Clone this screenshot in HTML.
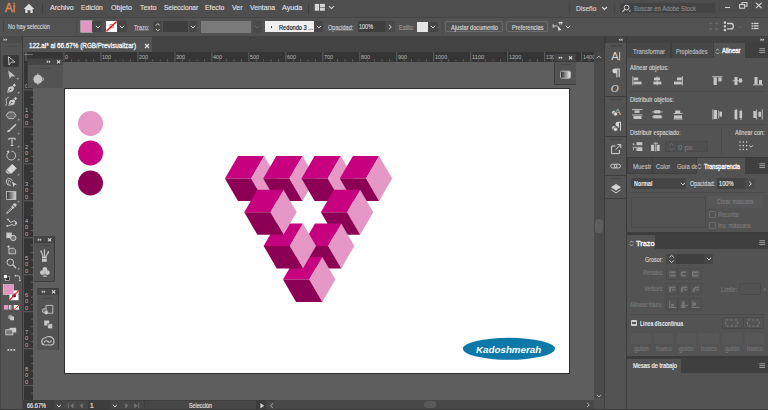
<!DOCTYPE html>
<html><head><meta charset="utf-8"><style>
html,body{margin:0;padding:0;width:768px;height:410px;overflow:hidden;background:#535353}
body>div,body>svg{position:absolute}
</style></head><body>
<div style="left:0px;top:0px;width:768px;height:17px;background:#4e4e4e;"></div>
<div style="left:0px;top:16.5px;width:768px;height:1px;background:#454545;"></div>
<div style="left:0px;top:17.5px;width:768px;height:18px;background:#525252;"></div>
<div style="left:0px;top:35.5px;width:768px;height:1px;background:#3e3e3e;"></div>
<div style="left:0px;top:36px;width:768px;height:7px;background:#424242;"></div>
<div style="left:0px;top:36px;width:23px;height:374px;background:#4a4a4a;"></div>
<div style="left:1px;top:43px;width:21px;height:367px;background:#535353;"></div>
<div style="left:23px;top:36px;width:581px;height:16px;background:#434343;"></div>
<div style="left:22px;top:37px;width:130px;height:15px;background:#535353;"></div>
<div style="left:24px;top:52px;width:570px;height:9.5px;background:#353535;"></div>
<div style="left:24px;top:61.5px;width:9px;height:338px;background:#353535;"></div>
<div style="left:33px;top:61.5px;width:561px;height:338px;background:#5e5e5e;"></div>
<div style="left:64px;top:88px;width:506px;height:285.5px;background:#2e2e2e;"></div>
<div style="left:65px;top:89px;width:504px;height:283.5px;background:#ffffff;"></div>
<div style="left:594px;top:52px;width:10px;height:347px;background:#4b4b4b;"></div>
<div style="left:22px;top:399.5px;width:582px;height:10.5px;background:#484848;"></div>
<div style="left:604px;top:36px;width:1.5px;height:374px;background:#3a3a3a;"></div>
<div style="left:605px;top:43px;width:21px;height:367px;background:#535353;"></div>
<div style="left:626px;top:36px;width:1px;height:374px;background:#3a3a3a;"></div>
<div style="left:627px;top:43px;width:141px;height:367px;background:#535353;"></div>
<svg style="left:0;top:0" width="768" height="410"><circle cx="90.5" cy="123.5" r="12.5" fill="#e597c5"/><circle cx="90.5" cy="153" r="12.5" fill="#c6007e"/><circle cx="90.5" cy="183" r="12.5" fill="#8b0055"/></svg>
<svg style="left:0;top:0" width="768" height="410"><polygon points="224.90,178.60 238.00,156.10 264.20,156.10 251.10,178.60" fill="#c6007e"/><polygon points="251.10,178.60 264.20,156.10 277.30,178.60 264.20,201.10" fill="#e597c5"/><polygon points="224.90,178.60 251.10,178.60 264.20,201.10 238.00,201.10" fill="#8b0055"/><polygon points="263.20,178.60 276.30,156.10 302.50,156.10 289.40,178.60" fill="#c6007e"/><polygon points="289.40,178.60 302.50,156.10 315.60,178.60 302.50,201.10" fill="#e597c5"/><polygon points="263.20,178.60 289.40,178.60 302.50,201.10 276.30,201.10" fill="#8b0055"/><polygon points="301.50,178.60 314.60,156.10 340.80,156.10 327.70,178.60" fill="#c6007e"/><polygon points="327.70,178.60 340.80,156.10 353.90,178.60 340.80,201.10" fill="#e597c5"/><polygon points="301.50,178.60 327.70,178.60 340.80,201.10 314.60,201.10" fill="#8b0055"/><polygon points="339.80,178.60 352.90,156.10 379.10,156.10 366.00,178.60" fill="#c6007e"/><polygon points="366.00,178.60 379.10,156.10 392.20,178.60 379.10,201.10" fill="#e597c5"/><polygon points="339.80,178.60 366.00,178.60 379.10,201.10 352.90,201.10" fill="#8b0055"/><polygon points="320.87,212.25 333.97,189.75 360.17,189.75 347.07,212.25" fill="#c6007e"/><polygon points="347.07,212.25 360.17,189.75 373.27,212.25 360.17,234.75" fill="#e597c5"/><polygon points="320.87,212.25 347.07,212.25 360.17,234.75 333.97,234.75" fill="#8b0055"/><polygon points="301.94,245.90 315.04,223.40 341.24,223.40 328.14,245.90" fill="#c6007e"/><polygon points="328.14,245.90 341.24,223.40 354.34,245.90 341.24,268.40" fill="#e597c5"/><polygon points="301.94,245.90 328.14,245.90 341.24,268.40 315.04,268.40" fill="#8b0055"/><polygon points="283.01,279.55 296.11,257.05 322.31,257.05 309.21,279.55" fill="#c6007e"/><polygon points="309.21,279.55 322.31,257.05 335.41,279.55 322.31,302.05" fill="#e597c5"/><polygon points="283.01,279.55 309.21,279.55 322.31,302.05 296.11,302.05" fill="#8b0055"/><polygon points="263.64,245.90 276.74,223.40 302.94,223.40 289.84,245.90" fill="#c6007e"/><polygon points="289.84,245.90 302.94,223.40 316.04,245.90 302.94,268.40" fill="#e597c5"/><polygon points="263.64,245.90 289.84,245.90 302.94,268.40 276.74,268.40" fill="#8b0055"/><polygon points="244.27,212.25 257.37,189.75 283.57,189.75 270.47,212.25" fill="#c6007e"/><polygon points="270.47,212.25 283.57,189.75 296.67,212.25 283.57,234.75" fill="#e597c5"/><polygon points="244.27,212.25 270.47,212.25 283.57,234.75 257.37,234.75" fill="#8b0055"/></svg>
<svg style="left:0;top:0" width="768" height="410"><ellipse cx="508.9" cy="348.8" rx="46.1" ry="11" fill="#0d79a8"/></svg>
<div style="left:476.20px;top:344.89px;font:italic bold 9.6px/1 'Liberation Sans', sans-serif;color:#ffffff;white-space:pre;transform:scaleX(1.019);transform-origin:0 0;">Kadoshmerah</div>
<div style="left:4.80px;top:2.07px;font:normal normal 12.8px/1 'Liberation Sans', sans-serif;color:#d68c55;white-space:pre;transform:scaleX(0.896);transform-origin:0 0;-webkit-text-stroke:0.45px #d68c55">Ai</div>
<svg style="left:23px;top:3px;" width="12" height="11" viewBox="0 0 12 11"><path d="M6 0.8 L11.3 6.1 L9.7 6.1 L9.7 10 L7.4 10 L7.4 7.2 L4.6 7.2 L4.6 10 L2.3 10 L2.3 6.1 L0.7 6.1 Z" fill="#dcdcdc"/></svg>
<div style="left:41.5px;top:3px;width:1px;height:11px;background:#3f3f3f;"></div>
<div style="left:50.00px;top:4.25px;font:normal normal 8px/1 'Liberation Sans', sans-serif;color:#e2e2e2;white-space:pre;transform:scaleX(0.888);transform-origin:0 0;-webkit-text-stroke:0.12px #e2e2e2">Archivo</div>
<div style="left:81.40px;top:4.25px;font:normal normal 8px/1 'Liberation Sans', sans-serif;color:#e2e2e2;white-space:pre;transform:scaleX(0.831);transform-origin:0 0;-webkit-text-stroke:0.12px #e2e2e2">Edición</div>
<div style="left:111.00px;top:4.25px;font:normal normal 8px/1 'Liberation Sans', sans-serif;color:#e2e2e2;white-space:pre;transform:scaleX(0.891);transform-origin:0 0;-webkit-text-stroke:0.12px #e2e2e2">Objeto</div>
<div style="left:139.50px;top:4.25px;font:normal normal 8px/1 'Liberation Sans', sans-serif;color:#e2e2e2;white-space:pre;transform:scaleX(0.863);transform-origin:0 0;-webkit-text-stroke:0.12px #e2e2e2">Texto</div>
<div style="left:163.50px;top:4.25px;font:normal normal 8px/1 'Liberation Sans', sans-serif;color:#e2e2e2;white-space:pre;transform:scaleX(0.816);transform-origin:0 0;-webkit-text-stroke:0.12px #e2e2e2">Seleccionar</div>
<div style="left:205.25px;top:4.25px;font:normal normal 8px/1 'Liberation Sans', sans-serif;color:#e2e2e2;white-space:pre;transform:scaleX(0.853);transform-origin:0 0;-webkit-text-stroke:0.12px #e2e2e2">Efecto</div>
<div style="left:231.50px;top:4.25px;font:normal normal 8px/1 'Liberation Sans', sans-serif;color:#e2e2e2;white-space:pre;transform:scaleX(0.883);transform-origin:0 0;-webkit-text-stroke:0.12px #e2e2e2">Ver</div>
<div style="left:249.50px;top:4.25px;font:normal normal 8px/1 'Liberation Sans', sans-serif;color:#e2e2e2;white-space:pre;transform:scaleX(0.855);transform-origin:0 0;-webkit-text-stroke:0.12px #e2e2e2">Ventana</div>
<div style="left:281.50px;top:4.25px;font:normal normal 8px/1 'Liberation Sans', sans-serif;color:#e2e2e2;white-space:pre;transform:scaleX(0.892);transform-origin:0 0;-webkit-text-stroke:0.12px #e2e2e2">Ayuda</div>
<div style="left:308px;top:3px;width:1px;height:11px;background:#3f3f3f;"></div>
<svg style="left:314px;top:3px;" width="12" height="8" viewBox="0 0 12 8"><rect x="0.8" y="0.9" width="4.2" height="6.8" fill="#d6d6d6"/><rect x="5.9" y="0.9" width="5" height="3.1" fill="#d6d6d6"/><rect x="5.9" y="4.6" width="5" height="3.1" fill="#d6d6d6"/></svg>
<svg style="left:328px;top:5px;" width="7" height="5" viewBox="0 0 7 5"><path d="M1 1.2 L3.5 3.6 L6 1.2" stroke="#d6d6d6" stroke-width="1.1" fill="none"/></svg>
<div style="left:569.3px;top:3px;width:1px;height:11px;background:#444444;"></div>
<div style="left:576.00px;top:4.55px;font:normal normal 8px/1 'Liberation Sans', sans-serif;color:#d6d6d6;white-space:pre;transform:scaleX(0.819);transform-origin:0 0;-webkit-text-stroke:0.15px #d6d6d6;">Diseño</div>
<svg style="left:601px;top:6px;" width="7" height="5" viewBox="0 0 7 5"><path d="M1 1 L3.5 3.5 L6 1" stroke="#d6d6d6" stroke-width="1.1" fill="none"/></svg>
<div style="left:614.2px;top:3px;width:1px;height:11px;background:#444444;"></div>
<div style="left:620px;top:3px;width:94.5px;height:10.3px;background:#434343;border-radius:1.5px"></div>
<svg style="left:621px;top:3.5px;" width="12" height="9" viewBox="0 0 12 9"><circle cx="5.6" cy="3.6" r="2.4" stroke="#cfcfcf" stroke-width="1" fill="none"/><path d="M3.9 5.3 L1.3 7.9" stroke="#cfcfcf" stroke-width="1.2"/><path d="M7.6 6.6 L10 6.6 L8.8 7.9 Z" fill="#cfcfcf"/></svg>
<div style="left:633.70px;top:5.23px;font:normal normal 7.2px/1 'Liberation Sans', sans-serif;color:#8a8a8a;white-space:pre;transform:scaleX(0.829);transform-origin:0 0;-webkit-text-stroke:0.15px #8a8a8a;">Buscar en Adobe Stock</div>
<div style="left:719px;top:-1px;width:47.5px;height:11.5px;background:transparent;box-sizing:border-box;border:1px solid #484848;border-radius:2px"></div>
<div style="left:735.5px;top:0px;width:1px;height:10.5px;background:#484848;"></div>
<div style="left:751.5px;top:0px;width:1px;height:10.5px;background:#484848;"></div>
<div style="left:724.5px;top:6.5px;width:5.5px;height:1.3px;background:#d6d6d6;"></div>
<svg style="left:739px;top:2px;" width="9" height="7" viewBox="0 0 9 7"><rect x="3" y="0.6" width="5" height="3.6" stroke="#d6d6d6" stroke-width="1" fill="none"/><rect x="0.6" y="2.6" width="5" height="3.6" stroke="#d6d6d6" stroke-width="1" fill="#4e4e4e"/></svg>
<svg style="left:755px;top:2px;" width="8" height="7" viewBox="0 0 8 7"><path d="M1 0.8 L6.6 6.2 M6.6 0.8 L1 6.2" stroke="#d6d6d6" stroke-width="1.1"/></svg>
<div style="left:2.7px;top:21px;width:1.6px;height:10.6px;background:#434343;"></div>
<div style="left:8.20px;top:24.25px;font:normal normal 6.7px/1 'Liberation Sans', sans-serif;color:#d6d6d6;white-space:pre;transform:scaleX(0.821);transform-origin:0 0;-webkit-text-stroke:0.15px #d6d6d6;">No hay selección</div>
<div style="left:76.4px;top:19px;width:1px;height:15px;background:#4a4a4a;"></div>
<div style="left:80.9px;top:21.3px;width:11px;height:10.7px;background:#e396c4;box-shadow:0 0 0 0.6px #cfcfcf"></div>
<div style="left:92px;top:21.3px;width:10.4px;height:10.7px;background:#464646;border-radius:0 2px 2px 0"></div>
<svg style="left:94.5px;top:25px;" width="6" height="4" viewBox="0 0 6 4"><path d="M0.8 0.8 L3 2.9 L5.2 0.8" stroke="#d8d8d8" stroke-width="1" fill="none"/></svg>
<div style="left:105.5px;top:21.3px;width:11px;height:10.7px;background:#ffffff;"></div>
<svg style="left:105.5px;top:21.3px;" width="11" height="10.7" viewBox="0 0 11 10.7"><rect x="4" y="3.5" width="3.3" height="3.3" stroke="#777" stroke-width="0.7" fill="none"/><path d="M0.5 10.2 L10.5 0.5" stroke="#ff0000" stroke-width="1.3"/></svg>
<div style="left:116.5px;top:21.3px;width:10.4px;height:10.7px;background:#464646;border-radius:0 2px 2px 0"></div>
<svg style="left:119px;top:25px;" width="6" height="4" viewBox="0 0 6 4"><path d="M0.8 0.8 L3 2.9 L5.2 0.8" stroke="#d8d8d8" stroke-width="1" fill="none"/></svg>
<div style="left:133.80px;top:24.59px;font:normal normal 6.3px/1 'Liberation Sans', sans-serif;color:#d0d0d0;white-space:pre;transform:scaleX(0.863);transform-origin:0 0;-webkit-text-stroke:0.15px #d0d0d0;">Trazo:</div>
<div style="left:133.8px;top:30.4px;width:15.2px;height:0.5px;background:#6e6e6e;"></div>
<div style="left:153.2px;top:21.4px;width:9px;height:10.6px;background:#464646;"></div>
<svg style="left:154px;top:21.5px;" width="8" height="10.5" viewBox="0 0 8 10.5"><path d="M1.8 3.6 L3.8 1.6 L5.8 3.6 M1.8 6.9 L3.8 8.9 L5.8 6.9" stroke="#d8d8d8" stroke-width="0.9" fill="none"/></svg>
<div style="left:163px;top:21.4px;width:24.5px;height:10.6px;background:#3e3e3e;"></div>
<div style="left:188.5px;top:21.4px;width:8px;height:10.6px;background:#464646;"></div>
<svg style="left:189.5px;top:25px;" width="6" height="4" viewBox="0 0 6 4"><path d="M0.8 0.8 L3 2.9 L5.2 0.8" stroke="#d8d8d8" stroke-width="1" fill="none"/></svg>
<div style="left:200.8px;top:21px;width:50.7px;height:12px;background:#7a7a7a;"></div>
<div style="left:252.5px;top:21px;width:9.3px;height:12px;background:#4a4a4a;"></div>
<svg style="left:254px;top:25px;" width="6" height="4" viewBox="0 0 6 4"><path d="M0.8 0.8 L3 2.9 L5.2 0.8" stroke="#6a6a6a" stroke-width="1" fill="none"/></svg>
<div style="left:265.2px;top:21px;width:48.8px;height:11px;background:#efefef;"></div>
<div style="left:270.5px;top:26.2px;width:1.4px;height:1.4px;background:#222;border-radius:1px"></div>
<div style="left:279.00px;top:24.53px;font:normal normal 6.5px/1 'Liberation Sans', sans-serif;color:#111111;white-space:pre;transform:scaleX(0.871);transform-origin:0 0;-webkit-text-stroke:0.15px #111111;">Redondo 3 ...</div>
<div style="left:314px;top:21px;width:9.3px;height:11px;background:#464646;"></div>
<svg style="left:315.7px;top:25px;" width="6" height="4" viewBox="0 0 6 4"><path d="M0.8 0.8 L3 2.9 L5.2 0.8" stroke="#d8d8d8" stroke-width="1" fill="none"/></svg>
<div style="left:327.90px;top:24.59px;font:normal normal 6.3px/1 'Liberation Sans', sans-serif;color:#d0d0d0;white-space:pre;transform:scaleX(0.881);transform-origin:0 0;-webkit-text-stroke:0.15px #d0d0d0;">Opacidad:</div>
<div style="left:327.9px;top:30.4px;width:25.3px;height:0.5px;background:#6e6e6e;"></div>
<div style="left:357.6px;top:21px;width:27.1px;height:11px;background:#3e3e3e;"></div>
<div style="left:359.20px;top:24.43px;font:normal normal 6.5px/1 'Liberation Sans', sans-serif;color:#d6d6d6;white-space:pre;transform:scaleX(0.842);transform-origin:0 0;-webkit-text-stroke:0.15px #d6d6d6;">100%</div>
<div style="left:385px;top:21px;width:10px;height:11px;background:#4a4a4a;box-sizing:border-box;border:0.6px solid #474747"></div>
<svg style="left:388px;top:24px;" width="5" height="6" viewBox="0 0 5 6"><path d="M1 0.8 L3.3 3 L1 5.2" stroke="#d8d8d8" stroke-width="1" fill="none"/></svg>
<div style="left:399.00px;top:24.59px;font:normal normal 6.3px/1 'Liberation Sans', sans-serif;color:#9a9a9a;white-space:pre;transform:scaleX(0.875);transform-origin:0 0;-webkit-text-stroke:0.15px #9a9a9a;">Estilo:</div>
<div style="left:417.4px;top:21.5px;width:10.8px;height:10.5px;background:#e6e6e6;"></div>
<div style="left:428.2px;top:21.5px;width:9.8px;height:10.5px;background:#464646;"></div>
<svg style="left:430.3px;top:25px;" width="6" height="4" viewBox="0 0 6 4"><path d="M0.8 0.8 L3 2.9 L5.2 0.8" stroke="#d8d8d8" stroke-width="1" fill="none"/></svg>
<div style="left:441.5px;top:19px;width:1px;height:15px;background:#484848;"></div>
<div style="left:445.4px;top:21px;width:58.1px;height:11px;background:transparent;box-sizing:border-box;border:1px solid #6a6a6a;border-radius:2px"></div>
<div style="left:451.00px;top:24.59px;font:normal normal 6.3px/1 'Liberation Sans', sans-serif;color:#d8d8d8;white-space:pre;transform:scaleX(0.895);transform-origin:0 0;-webkit-text-stroke:0.15px #d8d8d8;">Ajustar documento</div>
<div style="left:506px;top:21px;width:42px;height:11px;background:transparent;box-sizing:border-box;border:1px solid #6a6a6a;border-radius:2px"></div>
<div style="left:512.00px;top:24.59px;font:normal normal 6.3px/1 'Liberation Sans', sans-serif;color:#d8d8d8;white-space:pre;transform:scaleX(0.891);transform-origin:0 0;-webkit-text-stroke:0.15px #d8d8d8;">Preferencias</div>
<svg style="left:552px;top:21px;" width="12" height="12" viewBox="0 0 12 12"><path d="M1.2 5 L5 5 M1.2 3.3 L1.2 6.8 M7.8 0.8 L7.8 3.6 M9.3 0.8 L9.3 3.6 M6.5 1.6 L10.8 1.6" stroke="#d4d4d4" stroke-width="1" fill="none"/><path d="M5.3 4.2 L9.6 9.2 L7.4 9.1 L6.9 10.9 Z" fill="#e0e0e0"/></svg>
<svg style="left:565px;top:25px;" width="6" height="4" viewBox="0 0 6 4"><path d="M0.8 0.8 L3 2.9 L5.2 0.8" stroke="#d8d8d8" stroke-width="1" fill="none"/></svg>
<svg style="left:709px;top:22px;" width="10" height="9" viewBox="0 0 10 9"><g fill="#6e6e6e"><rect x="0.5" y="0.5" width="2" height="2"/><rect x="6.5" y="0.5" width="2" height="2"/><rect x="0.5" y="6" width="2" height="2"/><rect x="6.5" y="6" width="2" height="2"/></g></svg>
<svg style="left:723px;top:21px;" width="12" height="11" viewBox="0 0 12 11"><g fill="#d0d0d0"><rect x="0.8" y="0.5" width="2.2" height="2.2"/><rect x="0.8" y="4.2" width="2.2" height="2.2"/><rect x="0.8" y="7.9" width="2.2" height="2.2"/></g><path d="M4 2.5 L8.2 2.5 Q10.3 2.5 10.3 5.2 Q10.3 7.9 8.2 7.9 L4 7.9" stroke="#d0d0d0" stroke-width="1.3" fill="none"/></svg>
<svg style="left:737px;top:25px;" width="6" height="4" viewBox="0 0 6 4"><path d="M0.8 0.8 L3 2.9 L5.2 0.8" stroke="#6e6e6e" stroke-width="1" fill="none"/></svg>
<svg style="left:751px;top:22px;" width="8" height="9" viewBox="0 0 8 9"><g fill="#d0d0d0"><rect x="0.5" y="0.8" width="1.5" height="1.3"/><rect x="2.5" y="0.8" width="5" height="1.3"/><rect x="0.5" y="3.3" width="1.5" height="1.3"/><rect x="2.5" y="3.3" width="5" height="1.3"/><rect x="0.5" y="5.8" width="1.5" height="1.3"/><rect x="2.5" y="5.8" width="5" height="1.3"/></g></svg>
<div style="left:28.70px;top:42.13px;font:normal normal 7.2px/1 'Liberation Sans', sans-serif;color:#f4f4f4;white-space:pre;transform:scaleX(0.878);transform-origin:0 0;-webkit-text-stroke:0.3px #f4f4f4">122.ai* al 66.67% (RGB/Previsualizar)</div>
<svg style="left:144px;top:42.5px;" width="6" height="6" viewBox="0 0 6 6"><path d="M1 1 L5 5 M5 1 L1 5" stroke="#e0e0e0" stroke-width="1.2"/></svg>
<svg style="left:0px;top:0px;" width="768" height="410" viewBox="0 0 768 410"><rect x="63.60" y="52" width="0.8" height="9.5" fill="#6a6a6a"/><rect x="71.00" y="59.3" width="0.8" height="2.2" fill="#6a6a6a"/><rect x="78.39" y="59.3" width="0.8" height="2.2" fill="#6a6a6a"/><rect x="85.79" y="59.3" width="0.8" height="2.2" fill="#6a6a6a"/><rect x="93.18" y="59.3" width="0.8" height="2.2" fill="#6a6a6a"/><rect x="100.58" y="52" width="0.8" height="9.5" fill="#6a6a6a"/><rect x="107.98" y="59.3" width="0.8" height="2.2" fill="#6a6a6a"/><rect x="115.37" y="59.3" width="0.8" height="2.2" fill="#6a6a6a"/><rect x="122.77" y="59.3" width="0.8" height="2.2" fill="#6a6a6a"/><rect x="130.16" y="59.3" width="0.8" height="2.2" fill="#6a6a6a"/><rect x="137.56" y="52" width="0.8" height="9.5" fill="#6a6a6a"/><rect x="144.96" y="59.3" width="0.8" height="2.2" fill="#6a6a6a"/><rect x="152.35" y="59.3" width="0.8" height="2.2" fill="#6a6a6a"/><rect x="159.75" y="59.3" width="0.8" height="2.2" fill="#6a6a6a"/><rect x="167.14" y="59.3" width="0.8" height="2.2" fill="#6a6a6a"/><rect x="174.54" y="52" width="0.8" height="9.5" fill="#6a6a6a"/><rect x="181.94" y="59.3" width="0.8" height="2.2" fill="#6a6a6a"/><rect x="189.33" y="59.3" width="0.8" height="2.2" fill="#6a6a6a"/><rect x="196.73" y="59.3" width="0.8" height="2.2" fill="#6a6a6a"/><rect x="204.12" y="59.3" width="0.8" height="2.2" fill="#6a6a6a"/><rect x="211.52" y="52" width="0.8" height="9.5" fill="#6a6a6a"/><rect x="218.92" y="59.3" width="0.8" height="2.2" fill="#6a6a6a"/><rect x="226.31" y="59.3" width="0.8" height="2.2" fill="#6a6a6a"/><rect x="233.71" y="59.3" width="0.8" height="2.2" fill="#6a6a6a"/><rect x="241.10" y="59.3" width="0.8" height="2.2" fill="#6a6a6a"/><rect x="248.50" y="52" width="0.8" height="9.5" fill="#6a6a6a"/><rect x="255.90" y="59.3" width="0.8" height="2.2" fill="#6a6a6a"/><rect x="263.29" y="59.3" width="0.8" height="2.2" fill="#6a6a6a"/><rect x="270.69" y="59.3" width="0.8" height="2.2" fill="#6a6a6a"/><rect x="278.08" y="59.3" width="0.8" height="2.2" fill="#6a6a6a"/><rect x="285.48" y="52" width="0.8" height="9.5" fill="#6a6a6a"/><rect x="292.88" y="59.3" width="0.8" height="2.2" fill="#6a6a6a"/><rect x="300.27" y="59.3" width="0.8" height="2.2" fill="#6a6a6a"/><rect x="307.67" y="59.3" width="0.8" height="2.2" fill="#6a6a6a"/><rect x="315.06" y="59.3" width="0.8" height="2.2" fill="#6a6a6a"/><rect x="322.46" y="52" width="0.8" height="9.5" fill="#6a6a6a"/><rect x="329.86" y="59.3" width="0.8" height="2.2" fill="#6a6a6a"/><rect x="337.25" y="59.3" width="0.8" height="2.2" fill="#6a6a6a"/><rect x="344.65" y="59.3" width="0.8" height="2.2" fill="#6a6a6a"/><rect x="352.04" y="59.3" width="0.8" height="2.2" fill="#6a6a6a"/><rect x="359.44" y="52" width="0.8" height="9.5" fill="#6a6a6a"/><rect x="366.84" y="59.3" width="0.8" height="2.2" fill="#6a6a6a"/><rect x="374.23" y="59.3" width="0.8" height="2.2" fill="#6a6a6a"/><rect x="381.63" y="59.3" width="0.8" height="2.2" fill="#6a6a6a"/><rect x="389.02" y="59.3" width="0.8" height="2.2" fill="#6a6a6a"/><rect x="396.42" y="52" width="0.8" height="9.5" fill="#6a6a6a"/><rect x="403.82" y="59.3" width="0.8" height="2.2" fill="#6a6a6a"/><rect x="411.21" y="59.3" width="0.8" height="2.2" fill="#6a6a6a"/><rect x="418.61" y="59.3" width="0.8" height="2.2" fill="#6a6a6a"/><rect x="426.00" y="59.3" width="0.8" height="2.2" fill="#6a6a6a"/><rect x="433.40" y="52" width="0.8" height="9.5" fill="#6a6a6a"/><rect x="440.80" y="59.3" width="0.8" height="2.2" fill="#6a6a6a"/><rect x="448.19" y="59.3" width="0.8" height="2.2" fill="#6a6a6a"/><rect x="455.59" y="59.3" width="0.8" height="2.2" fill="#6a6a6a"/><rect x="462.98" y="59.3" width="0.8" height="2.2" fill="#6a6a6a"/><rect x="470.38" y="52" width="0.8" height="9.5" fill="#6a6a6a"/><rect x="477.78" y="59.3" width="0.8" height="2.2" fill="#6a6a6a"/><rect x="485.17" y="59.3" width="0.8" height="2.2" fill="#6a6a6a"/><rect x="492.57" y="59.3" width="0.8" height="2.2" fill="#6a6a6a"/><rect x="499.96" y="59.3" width="0.8" height="2.2" fill="#6a6a6a"/><rect x="507.36" y="52" width="0.8" height="9.5" fill="#6a6a6a"/><rect x="514.76" y="59.3" width="0.8" height="2.2" fill="#6a6a6a"/><rect x="522.15" y="59.3" width="0.8" height="2.2" fill="#6a6a6a"/><rect x="529.55" y="59.3" width="0.8" height="2.2" fill="#6a6a6a"/><rect x="536.94" y="59.3" width="0.8" height="2.2" fill="#6a6a6a"/><rect x="544.34" y="52" width="0.8" height="9.5" fill="#6a6a6a"/><rect x="551.74" y="59.3" width="0.8" height="2.2" fill="#6a6a6a"/><rect x="559.13" y="59.3" width="0.8" height="2.2" fill="#6a6a6a"/><rect x="566.53" y="59.3" width="0.8" height="2.2" fill="#6a6a6a"/><rect x="573.92" y="59.3" width="0.8" height="2.2" fill="#6a6a6a"/><rect x="581.32" y="52" width="0.8" height="9.5" fill="#6a6a6a"/><rect x="588.72" y="59.3" width="0.8" height="2.2" fill="#6a6a6a"/><rect x="56.20" y="59.3" width="0.8" height="2.2" fill="#6a6a6a"/><rect x="48.81" y="59.3" width="0.8" height="2.2" fill="#6a6a6a"/><rect x="41.41" y="59.3" width="0.8" height="2.2" fill="#6a6a6a"/><rect x="34.02" y="59.3" width="0.8" height="2.2" fill="#6a6a6a"/><rect x="24" y="89.50" width="9" height="0.8" fill="#6a6a6a"/><rect x="30.8" y="96.90" width="2.2" height="0.8" fill="#6a6a6a"/><rect x="30.8" y="104.29" width="2.2" height="0.8" fill="#6a6a6a"/><rect x="30.8" y="111.69" width="2.2" height="0.8" fill="#6a6a6a"/><rect x="30.8" y="119.08" width="2.2" height="0.8" fill="#6a6a6a"/><rect x="24" y="126.48" width="9" height="0.8" fill="#6a6a6a"/><rect x="30.8" y="133.88" width="2.2" height="0.8" fill="#6a6a6a"/><rect x="30.8" y="141.27" width="2.2" height="0.8" fill="#6a6a6a"/><rect x="30.8" y="148.67" width="2.2" height="0.8" fill="#6a6a6a"/><rect x="30.8" y="156.06" width="2.2" height="0.8" fill="#6a6a6a"/><rect x="24" y="163.46" width="9" height="0.8" fill="#6a6a6a"/><rect x="30.8" y="170.86" width="2.2" height="0.8" fill="#6a6a6a"/><rect x="30.8" y="178.25" width="2.2" height="0.8" fill="#6a6a6a"/><rect x="30.8" y="185.65" width="2.2" height="0.8" fill="#6a6a6a"/><rect x="30.8" y="193.04" width="2.2" height="0.8" fill="#6a6a6a"/><rect x="24" y="200.44" width="9" height="0.8" fill="#6a6a6a"/><rect x="30.8" y="207.84" width="2.2" height="0.8" fill="#6a6a6a"/><rect x="30.8" y="215.23" width="2.2" height="0.8" fill="#6a6a6a"/><rect x="30.8" y="222.63" width="2.2" height="0.8" fill="#6a6a6a"/><rect x="30.8" y="230.02" width="2.2" height="0.8" fill="#6a6a6a"/><rect x="24" y="237.42" width="9" height="0.8" fill="#6a6a6a"/><rect x="30.8" y="244.82" width="2.2" height="0.8" fill="#6a6a6a"/><rect x="30.8" y="252.21" width="2.2" height="0.8" fill="#6a6a6a"/><rect x="30.8" y="259.61" width="2.2" height="0.8" fill="#6a6a6a"/><rect x="30.8" y="267.00" width="2.2" height="0.8" fill="#6a6a6a"/><rect x="24" y="274.40" width="9" height="0.8" fill="#6a6a6a"/><rect x="30.8" y="281.80" width="2.2" height="0.8" fill="#6a6a6a"/><rect x="30.8" y="289.19" width="2.2" height="0.8" fill="#6a6a6a"/><rect x="30.8" y="296.59" width="2.2" height="0.8" fill="#6a6a6a"/><rect x="30.8" y="303.98" width="2.2" height="0.8" fill="#6a6a6a"/><rect x="24" y="311.38" width="9" height="0.8" fill="#6a6a6a"/><rect x="30.8" y="318.78" width="2.2" height="0.8" fill="#6a6a6a"/><rect x="30.8" y="326.17" width="2.2" height="0.8" fill="#6a6a6a"/><rect x="30.8" y="333.57" width="2.2" height="0.8" fill="#6a6a6a"/><rect x="30.8" y="340.96" width="2.2" height="0.8" fill="#6a6a6a"/><rect x="24" y="348.36" width="9" height="0.8" fill="#6a6a6a"/><rect x="30.8" y="355.76" width="2.2" height="0.8" fill="#6a6a6a"/><rect x="30.8" y="363.15" width="2.2" height="0.8" fill="#6a6a6a"/><rect x="30.8" y="370.55" width="2.2" height="0.8" fill="#6a6a6a"/><rect x="30.8" y="377.94" width="2.2" height="0.8" fill="#6a6a6a"/><rect x="24" y="385.34" width="9" height="0.8" fill="#6a6a6a"/><rect x="30.8" y="392.74" width="2.2" height="0.8" fill="#6a6a6a"/><rect x="30.8" y="82.10" width="2.2" height="0.8" fill="#6a6a6a"/><rect x="30.8" y="74.71" width="2.2" height="0.8" fill="#6a6a6a"/><rect x="30.8" y="67.31" width="2.2" height="0.8" fill="#6a6a6a"/></svg>
<div style="left:33px;top:52px;width:0.8px;height:9.5px;background:#2e2e2e;"></div>
<div style="left:24px;top:61.5px;width:9.8px;height:0.8px;background:#2e2e2e;"></div>
<svg style="left:24px;top:52px;" width="10" height="10" viewBox="0 0 10 10"><path d="M2 0 L2 9 M0 2.5 L9 2.5" stroke="#9a9a9a" stroke-width="0.6"/></svg>
<div style="left:64.90px;top:55.02px;font:normal normal 5.8px/1 'Liberation Sans', sans-serif;color:#b8b8b8;white-space:pre;transform:scaleX(0.946);transform-origin:0 0;-webkit-text-stroke:0">0</div>
<div style="left:101.88px;top:55.02px;font:normal normal 5.8px/1 'Liberation Sans', sans-serif;color:#b8b8b8;white-space:pre;transform:scaleX(0.946);transform-origin:0 0;-webkit-text-stroke:0">100</div>
<div style="left:138.86px;top:55.02px;font:normal normal 5.8px/1 'Liberation Sans', sans-serif;color:#b8b8b8;white-space:pre;transform:scaleX(0.946);transform-origin:0 0;-webkit-text-stroke:0">200</div>
<div style="left:175.84px;top:55.02px;font:normal normal 5.8px/1 'Liberation Sans', sans-serif;color:#b8b8b8;white-space:pre;transform:scaleX(0.946);transform-origin:0 0;-webkit-text-stroke:0">300</div>
<div style="left:212.82px;top:55.02px;font:normal normal 5.8px/1 'Liberation Sans', sans-serif;color:#b8b8b8;white-space:pre;transform:scaleX(0.946);transform-origin:0 0;-webkit-text-stroke:0">400</div>
<div style="left:249.80px;top:55.02px;font:normal normal 5.8px/1 'Liberation Sans', sans-serif;color:#b8b8b8;white-space:pre;transform:scaleX(0.946);transform-origin:0 0;-webkit-text-stroke:0">500</div>
<div style="left:286.78px;top:55.02px;font:normal normal 5.8px/1 'Liberation Sans', sans-serif;color:#b8b8b8;white-space:pre;transform:scaleX(0.946);transform-origin:0 0;-webkit-text-stroke:0">600</div>
<div style="left:323.76px;top:55.02px;font:normal normal 5.8px/1 'Liberation Sans', sans-serif;color:#b8b8b8;white-space:pre;transform:scaleX(0.946);transform-origin:0 0;-webkit-text-stroke:0">700</div>
<div style="left:360.74px;top:55.02px;font:normal normal 5.8px/1 'Liberation Sans', sans-serif;color:#b8b8b8;white-space:pre;transform:scaleX(0.946);transform-origin:0 0;-webkit-text-stroke:0">800</div>
<div style="left:397.72px;top:55.02px;font:normal normal 5.8px/1 'Liberation Sans', sans-serif;color:#b8b8b8;white-space:pre;transform:scaleX(0.946);transform-origin:0 0;-webkit-text-stroke:0">900</div>
<div style="left:434.70px;top:55.02px;font:normal normal 5.8px/1 'Liberation Sans', sans-serif;color:#b8b8b8;white-space:pre;transform:scaleX(0.946);transform-origin:0 0;-webkit-text-stroke:0">1000</div>
<div style="left:471.68px;top:55.02px;font:normal normal 5.8px/1 'Liberation Sans', sans-serif;color:#b8b8b8;white-space:pre;transform:scaleX(0.979);transform-origin:0 0;-webkit-text-stroke:0">1100</div>
<div style="left:508.66px;top:55.02px;font:normal normal 5.8px/1 'Liberation Sans', sans-serif;color:#b8b8b8;white-space:pre;transform:scaleX(0.946);transform-origin:0 0;-webkit-text-stroke:0">1200</div>
<div style="left:545.64px;top:55.02px;font:normal normal 5.8px/1 'Liberation Sans', sans-serif;color:#b8b8b8;white-space:pre;transform:scaleX(0.946);transform-origin:0 0;-webkit-text-stroke:0">1300</div>
<div style="left:582.62px;top:55.02px;font:normal normal 5.8px/1 'Liberation Sans', sans-serif;color:#b8b8b8;white-space:pre;transform:scaleX(0.946);transform-origin:0 0;-webkit-text-stroke:0">1400</div>
<div style="left:24.80px;top:82.75px;font:normal normal 6px/1 'Liberation Sans', sans-serif;color:#b8b8b8;white-space:pre;transform:scaleX(0.959);transform-origin:0 0;-webkit-text-stroke:0">0</div>
<div style="left:24.80px;top:119.73px;font:normal normal 6px/1 'Liberation Sans', sans-serif;color:#b8b8b8;white-space:pre;transform:scaleX(0.959);transform-origin:0 0;-webkit-text-stroke:0">0</div>
<div style="left:24.80px;top:113.23px;font:normal normal 6px/1 'Liberation Sans', sans-serif;color:#b8b8b8;white-space:pre;transform:scaleX(0.959);transform-origin:0 0;-webkit-text-stroke:0">0</div>
<div style="left:24.80px;top:106.73px;font:normal normal 6px/1 'Liberation Sans', sans-serif;color:#b8b8b8;white-space:pre;transform:scaleX(0.959);transform-origin:0 0;-webkit-text-stroke:0">1</div>
<div style="left:24.80px;top:156.71px;font:normal normal 6px/1 'Liberation Sans', sans-serif;color:#b8b8b8;white-space:pre;transform:scaleX(0.959);transform-origin:0 0;-webkit-text-stroke:0">0</div>
<div style="left:24.80px;top:150.21px;font:normal normal 6px/1 'Liberation Sans', sans-serif;color:#b8b8b8;white-space:pre;transform:scaleX(0.959);transform-origin:0 0;-webkit-text-stroke:0">0</div>
<div style="left:24.80px;top:143.71px;font:normal normal 6px/1 'Liberation Sans', sans-serif;color:#b8b8b8;white-space:pre;transform:scaleX(0.959);transform-origin:0 0;-webkit-text-stroke:0">2</div>
<div style="left:24.80px;top:193.69px;font:normal normal 6px/1 'Liberation Sans', sans-serif;color:#b8b8b8;white-space:pre;transform:scaleX(0.959);transform-origin:0 0;-webkit-text-stroke:0">0</div>
<div style="left:24.80px;top:187.19px;font:normal normal 6px/1 'Liberation Sans', sans-serif;color:#b8b8b8;white-space:pre;transform:scaleX(0.959);transform-origin:0 0;-webkit-text-stroke:0">0</div>
<div style="left:24.80px;top:180.69px;font:normal normal 6px/1 'Liberation Sans', sans-serif;color:#b8b8b8;white-space:pre;transform:scaleX(0.959);transform-origin:0 0;-webkit-text-stroke:0">3</div>
<div style="left:24.80px;top:230.67px;font:normal normal 6px/1 'Liberation Sans', sans-serif;color:#b8b8b8;white-space:pre;transform:scaleX(0.959);transform-origin:0 0;-webkit-text-stroke:0">0</div>
<div style="left:24.80px;top:224.17px;font:normal normal 6px/1 'Liberation Sans', sans-serif;color:#b8b8b8;white-space:pre;transform:scaleX(0.959);transform-origin:0 0;-webkit-text-stroke:0">0</div>
<div style="left:24.80px;top:217.67px;font:normal normal 6px/1 'Liberation Sans', sans-serif;color:#b8b8b8;white-space:pre;transform:scaleX(0.959);transform-origin:0 0;-webkit-text-stroke:0">4</div>
<div style="left:24.80px;top:267.65px;font:normal normal 6px/1 'Liberation Sans', sans-serif;color:#b8b8b8;white-space:pre;transform:scaleX(0.959);transform-origin:0 0;-webkit-text-stroke:0">0</div>
<div style="left:24.80px;top:261.15px;font:normal normal 6px/1 'Liberation Sans', sans-serif;color:#b8b8b8;white-space:pre;transform:scaleX(0.959);transform-origin:0 0;-webkit-text-stroke:0">0</div>
<div style="left:24.80px;top:254.65px;font:normal normal 6px/1 'Liberation Sans', sans-serif;color:#b8b8b8;white-space:pre;transform:scaleX(0.959);transform-origin:0 0;-webkit-text-stroke:0">5</div>
<div style="left:24.80px;top:304.63px;font:normal normal 6px/1 'Liberation Sans', sans-serif;color:#b8b8b8;white-space:pre;transform:scaleX(0.959);transform-origin:0 0;-webkit-text-stroke:0">0</div>
<div style="left:24.80px;top:298.13px;font:normal normal 6px/1 'Liberation Sans', sans-serif;color:#b8b8b8;white-space:pre;transform:scaleX(0.959);transform-origin:0 0;-webkit-text-stroke:0">0</div>
<div style="left:24.80px;top:291.63px;font:normal normal 6px/1 'Liberation Sans', sans-serif;color:#b8b8b8;white-space:pre;transform:scaleX(0.959);transform-origin:0 0;-webkit-text-stroke:0">6</div>
<div style="left:24.80px;top:341.61px;font:normal normal 6px/1 'Liberation Sans', sans-serif;color:#b8b8b8;white-space:pre;transform:scaleX(0.959);transform-origin:0 0;-webkit-text-stroke:0">0</div>
<div style="left:24.80px;top:335.11px;font:normal normal 6px/1 'Liberation Sans', sans-serif;color:#b8b8b8;white-space:pre;transform:scaleX(0.959);transform-origin:0 0;-webkit-text-stroke:0">0</div>
<div style="left:24.80px;top:328.61px;font:normal normal 6px/1 'Liberation Sans', sans-serif;color:#b8b8b8;white-space:pre;transform:scaleX(0.959);transform-origin:0 0;-webkit-text-stroke:0">7</div>
<div style="left:24.80px;top:378.59px;font:normal normal 6px/1 'Liberation Sans', sans-serif;color:#b8b8b8;white-space:pre;transform:scaleX(0.959);transform-origin:0 0;-webkit-text-stroke:0">0</div>
<div style="left:24.80px;top:372.09px;font:normal normal 6px/1 'Liberation Sans', sans-serif;color:#b8b8b8;white-space:pre;transform:scaleX(0.959);transform-origin:0 0;-webkit-text-stroke:0">0</div>
<div style="left:24.80px;top:365.59px;font:normal normal 6px/1 'Liberation Sans', sans-serif;color:#b8b8b8;white-space:pre;transform:scaleX(0.959);transform-origin:0 0;-webkit-text-stroke:0">8</div>
<div style="left:27.1px;top:58.4px;width:36.4px;height:30px;background:#3c3c3c;border-radius:1px"></div>
<div style="left:27.700000000000003px;top:59.0px;width:35.199999999999996px;height:6.4px;background:#454545;"></div>
<div style="left:27.700000000000003px;top:65.4px;width:35.199999999999996px;height:22.4px;background:#535353;"></div>
<svg style="left:45.5px;top:60.4px;" width="16" height="4" viewBox="0 0 16 4"><path d="M0.8 0.3 L2.6 1.8 L0.8 3.3 Z M2.8 0.3 L4.6 1.8 L2.8 3.3 Z" fill="#cfcfcf"/><path d="M11 0.3 L14.2 3.3 M14.2 0.3 L11 3.3" stroke="#cfcfcf" stroke-width="1.1"/></svg>
<div style="left:39.8px;top:68.0px;width:11px;height:1.2px;background:#474747;"></div>
<svg style="left:32px;top:73px;" width="12" height="12" viewBox="0 0 12 12"><circle cx="5.9" cy="6.2" r="4.5" fill="#c4c4c4"/><path d="M5.9 0.6 L5.9 2 M5.9 10.4 L5.9 11.8" stroke="#c4c4c4" stroke-width="1.1"/><path d="M10.7 4.6 L11.8 6.2 L10.7 7.8" stroke="#c4c4c4" stroke-width="0.9" fill="none"/></svg>
<div style="left:33.5px;top:235.5px;width:21.2px;height:46px;background:#3c3c3c;border-radius:1px"></div>
<div style="left:34.1px;top:236.1px;width:20.0px;height:6.4px;background:#454545;"></div>
<div style="left:34.1px;top:242.5px;width:20.0px;height:38.4px;background:#535353;"></div>
<svg style="left:36.7px;top:237.5px;" width="16" height="4" viewBox="0 0 16 4"><path d="M0.8 0.3 L2.6 1.8 L0.8 3.3 Z M2.8 0.3 L4.6 1.8 L2.8 3.3 Z" fill="#cfcfcf"/><path d="M11 0.3 L14.2 3.3 M14.2 0.3 L11 3.3" stroke="#cfcfcf" stroke-width="1.1"/></svg>
<div style="left:38.6px;top:245.1px;width:11px;height:1.2px;background:#474747;"></div>
<div style="left:36.7px;top:288.2px;width:22px;height:62px;background:#3c3c3c;border-radius:1px"></div>
<div style="left:37.300000000000004px;top:288.8px;width:20.8px;height:6.4px;background:#454545;"></div>
<div style="left:37.300000000000004px;top:295.2px;width:20.8px;height:54.4px;background:#535353;"></div>
<svg style="left:40.7px;top:290.2px;" width="16" height="4" viewBox="0 0 16 4"><path d="M0.8 0.3 L2.6 1.8 L0.8 3.3 Z M2.8 0.3 L4.6 1.8 L2.8 3.3 Z" fill="#cfcfcf"/><path d="M11 0.3 L14.2 3.3 M14.2 0.3 L11 3.3" stroke="#cfcfcf" stroke-width="1.1"/></svg>
<div style="left:42.2px;top:297.8px;width:11px;height:1.2px;background:#474747;"></div>
<div style="left:554.4px;top:53.5px;width:21.8px;height:31px;background:#3c3c3c;border-radius:1px"></div>
<div style="left:555.0px;top:54.1px;width:20.6px;height:7.4px;background:#454545;"></div>
<div style="left:555.0px;top:61.5px;width:20.6px;height:22.4px;background:#535353;"></div>
<svg style="left:558.1999999999999px;top:55.5px;" width="16" height="4" viewBox="0 0 16 4"><path d="M0.8 0.3 L2.6 1.8 L0.8 3.3 Z M2.8 0.3 L4.6 1.8 L2.8 3.3 Z" fill="#cfcfcf"/><path d="M11 0.3 L14.2 3.3 M14.2 0.3 L11 3.3" stroke="#cfcfcf" stroke-width="1.1"/></svg>
<div style="left:559.8px;top:64.1px;width:11px;height:1.2px;background:#474747;"></div>
<svg style="left:3px;top:38px;" width="6" height="4" viewBox="0 0 6 4"><path d="M0.5 0.3 L2.3 1.8 L0.5 3.3 Z M2.6 0.3 L4.4 1.8 L2.6 3.3 Z" fill="#cfcfcf"/></svg>
<div style="left:21.9px;top:36px;width:1.6px;height:374px;background:#3c3c3c;"></div>
<div style="left:0px;top:43px;width:0.7px;height:367px;background:#464646;"></div>
<div style="left:5.4px;top:46.2px;width:11.2px;height:1.2px;background:#474747;"></div>
<div style="left:3.4px;top:54.7px;width:15.7px;height:12.05px;background:#393939;border-radius:2px"></div>
<svg style="left:0px;top:0px;" width="24" height="410" viewBox="0 0 24 410"><path d="M8.4 56.6 L15 62.1 L11.3 62.1 L9 65 Z" stroke="#cbcbcb" stroke-width="0.9" fill="none" stroke-linejoin="round"/><path d="M8.2 70.3 L15.3 76.2 L11.4 76.4 L9.6 79 Z" fill="#c0c0c0"/><g transform="translate(0,0)"><path d="M14.3 83.6 L16 85.3 L14.3 87 L12.6 85.3 Z" fill="#cbcbcb"/><path d="M12.3 86 L14.2 87.9 L12.9 91.3 L6.9 92.9 L8.6 87.2 Z" fill="#cbcbcb"/><path d="M7.3 92.5 L10.3 89.5" stroke="#535353" stroke-width="0.7"/><circle cx="10.6" cy="89.2" r="0.7" fill="#535353"/></g><g transform="translate(1.2,13.2)"><path d="M14.3 83.6 L16 85.3 L14.3 87 L12.6 85.3 Z" fill="#cbcbcb"/><path d="M12.3 86 L14.2 87.9 L12.9 91.3 L6.9 92.9 L8.6 87.2 Z" fill="#cbcbcb"/><path d="M7.3 92.5 L10.3 89.5" stroke="#535353" stroke-width="0.7"/><circle cx="10.6" cy="89.2" r="0.7" fill="#535353"/></g><path d="M8.8 97.2 Q5.2 98.2 6.4 101.5 Q7.3 103.5 5.6 105.8" stroke="#cbcbcb" stroke-width="0.9" fill="none"/><path d="M8.7 112 L13.5 112 L16 115.3 L13.5 118.6 L8.7 118.6 L6.2 115.3 Z" stroke="#cbcbcb" stroke-width="0.9" fill="#6a6a6a"/><path d="M15.5 124.2 L16 124.7 L11 129.6 L10.4 129 Z" stroke="#cbcbcb" stroke-width="1" fill="#cbcbcb"/><path d="M9.8 129.2 L10.9 130.3 Q10 132.6 6.8 132.3 Q7.3 129.6 9.8 129.2 Z" fill="#cbcbcb"/><path d="M8.9 138.3 L15 138.3 L15 140 M8.9 140 L8.9 138.3 M12 138.3 L12 145.5 M10.6 145.5 L13.4 145.5" stroke="#cbcbcb" stroke-width="1.1" fill="none"/><path d="M8 152.6 A4.4 4.4 0 1 0 11.4 151.2" stroke="#cbcbcb" stroke-width="0.9" fill="none"/><path d="M6.3 151.6 L9.2 150.3 L9.3 153.6 Z" fill="#cbcbcb"/><path d="M12.3 164.3 L16.3 168.3 L11.5 173.2 L7.5 173.2 L6.2 171.8 L6.2 170.5 Z" stroke="#cbcbcb" stroke-width="0.9" fill="#d8d8d8" stroke-linejoin="round"/><path d="M6.6 170.2 L9.8 173.4" stroke="#555" stroke-width="0.9"/><path d="M12.5 181 Q11 178 8.5 178.3 Q5.8 179 6.2 182.3 Q6.8 185.8 11 185.3" stroke="#cbcbcb" stroke-width="0.9" fill="none"/><path d="M8.5 180.3 Q10.5 180 10.5 182.5 M8.2 180.5 L8.2 184.8" stroke="#cbcbcb" stroke-width="0.7" fill="none"/><path d="M11.8 181.4 L17 184.6 L14.6 185 L13.7 187.3 Z" fill="#cbcbcb"/><defs><linearGradient id="gt" x1="0" x2="1"><stop offset="0" stop-color="#2e2e2e"/><stop offset="1" stop-color="#d6d6d6"/></linearGradient></defs><rect x="6.4" y="191.6" width="9.5" height="7.9" fill="url(#gt)" stroke="#cbcbcb" stroke-width="0.8"/><path d="M13.6 203.8 Q15 202.6 16.2 203.8 Q17.3 205 16 206.3 L15.2 207.1 L12.8 204.7 Z" fill="#cbcbcb"/><path d="M12.3 205.3 L14.6 207.6 L13.6 208.6 L11.3 206.3 Z" fill="#cbcbcb"/><path d="M12.2 207.2 L13 208 L8.2 212.8 L6.6 213.5 L7.3 211.9 Z" stroke="#cbcbcb" stroke-width="0.9" fill="none" stroke-linejoin="round"/><path d="M7 219.5 Q9 219 9.3 221 Q9.6 223 11.5 222 Q13.5 220.5 15 221 Q17 221.5 16.5 224 L14.5 225.5 Q12 224 10.5 225 Q9 226 6.8 226" stroke="#cbcbcb" stroke-width="1" fill="none"/><circle cx="8.2" cy="219.6" r="0.9" fill="#cbcbcb"/><circle cx="7.2" cy="225.8" r="0.9" fill="#cbcbcb"/><circle cx="15.6" cy="223.2" r="0.9" fill="#cbcbcb"/><rect x="6.3" y="232.6" width="5.5" height="5.5" fill="#cbcbcb"/><circle cx="13.3" cy="238" r="2.7" stroke="#cbcbcb" stroke-width="1" fill="#777"/><path d="M8.6 245.2 L8.6 248 M7.1 246.7 L10 246.7" stroke="#cbcbcb" stroke-width="0.8"/><path d="M8.9 248.3 L13.8 248.3 L15.6 250 L15.6 253.8 L8.9 253.8 Z" stroke="#cbcbcb" stroke-width="0.9" fill="#6a6a6a"/><circle cx="10.3" cy="262.3" r="3.3" stroke="#cbcbcb" stroke-width="1" fill="none"/><path d="M12.8 264.8 L16 268" stroke="#cbcbcb" stroke-width="1.3"/><rect x="5.6" y="276.5" width="3.8" height="3.8" fill="#222" stroke="#d8d8d8" stroke-width="0.6"/><rect x="3.5" y="274.6" width="3.8" height="3.8" fill="#eee" stroke="#222" stroke-width="0.5"/><path d="M15 275.8 L18.3 275.8 Q19.8 276 19.8 278 L19.8 280.5" stroke="#cbcbcb" stroke-width="0.9" fill="none"/><path d="M14.3 275.8 L16 274.5 L16 277.1 Z M18.6 280 L21 280 L19.8 281.5 Z" fill="#cbcbcb"/><rect x="9.1" y="290.1" width="9.8" height="10.5" fill="#ffffff" stroke="#3a3a3a" stroke-width="0.5"/><rect x="12.3" y="293.6" width="3.5" height="3.5" fill="#222"/><path d="M9.4 300.4 L18.8 290.3" stroke="#ff1a1a" stroke-width="1.2"/><rect x="3.2" y="284.6" width="10.3" height="9.9" fill="#e396c4" stroke="#d8d8d8" stroke-width="0.6"/><rect x="3.9" y="305" width="4.3" height="4.6" fill="#e396c4"/><defs><linearGradient id="g2" x1="0" x2="1"><stop offset="0" stop-color="#f0f0f0"/><stop offset="1" stop-color="#505050"/></linearGradient></defs><rect x="8.9" y="305" width="4.1" height="4.6" fill="url(#g2)"/><rect x="13.8" y="305" width="5.2" height="4.6" fill="#fff"/><path d="M14 309.6 L19 305" stroke="#ff1a1a" stroke-width="1"/><circle cx="10.2" cy="317" r="2.3" fill="#9a9a9a"/><rect x="10.2" y="316.5" width="3.8" height="3.8" fill="#cbcbcb"/><rect x="9.3" y="327.7" width="7" height="5" fill="#cbcbcb" stroke="#555" stroke-width="0.3"/><rect x="5.8" y="329.8" width="7" height="5" fill="#7a7a7a" stroke="#cbcbcb" stroke-width="0.9"/><rect x="7.4" y="349" width="1.8" height="1.8" fill="#cbcbcb"/><rect x="10.4" y="349" width="1.8" height="1.8" fill="#cbcbcb"/><rect x="13.4" y="349" width="1.8" height="1.8" fill="#cbcbcb"/></svg>
<svg style="left:16.400000000000002px;top:77.39999999999999px;" width="3" height="3" viewBox="0 0 3 3"><path d="M2.3 0.4 L2.3 2.3 L0.4 2.3 Z" fill="#c8c8c8"/></svg>
<svg style="left:16.6px;top:91.1px;" width="3" height="3" viewBox="0 0 3 3"><path d="M2.3 0.4 L2.3 2.3 L0.4 2.3 Z" fill="#c8c8c8"/></svg>
<svg style="left:16.6px;top:117.89999999999999px;" width="3" height="3" viewBox="0 0 3 3"><path d="M2.3 0.4 L2.3 2.3 L0.4 2.3 Z" fill="#c8c8c8"/></svg>
<svg style="left:16.6px;top:131.8px;" width="3" height="3" viewBox="0 0 3 3"><path d="M2.3 0.4 L2.3 2.3 L0.4 2.3 Z" fill="#c8c8c8"/></svg>
<svg style="left:16.6px;top:144.8px;" width="3" height="3" viewBox="0 0 3 3"><path d="M2.3 0.4 L2.3 2.3 L0.4 2.3 Z" fill="#c8c8c8"/></svg>
<svg style="left:16.6px;top:158.3px;" width="3" height="3" viewBox="0 0 3 3"><path d="M2.3 0.4 L2.3 2.3 L0.4 2.3 Z" fill="#c8c8c8"/></svg>
<svg style="left:16.6px;top:172.5px;" width="3" height="3" viewBox="0 0 3 3"><path d="M2.3 0.4 L2.3 2.3 L0.4 2.3 Z" fill="#c8c8c8"/></svg>
<svg style="left:16.6px;top:199.5px;" width="3" height="3" viewBox="0 0 3 3"><path d="M2.3 0.4 L2.3 2.3 L0.4 2.3 Z" fill="#c8c8c8"/></svg>
<svg style="left:16.6px;top:266.8px;" width="3" height="3" viewBox="0 0 3 3"><path d="M2.3 0.4 L2.3 2.3 L0.4 2.3 Z" fill="#c8c8c8"/></svg>
<svg style="left:617.5px;top:38px;" width="6" height="4" viewBox="0 0 6 4"><path d="M4.5 0.3 L2.7 1.8 L4.5 3.3 Z M2.4 0.3 L0.6 1.8 L2.4 3.3 Z" fill="#cfcfcf"/></svg>
<svg style="left:759.5px;top:38px;" width="6" height="4" viewBox="0 0 6 4"><path d="M0.5 0.3 L2.3 1.8 L0.5 3.3 Z M2.6 0.3 L4.4 1.8 L2.6 3.3 Z" fill="#cfcfcf"/></svg>
<div style="left:604.3px;top:42.8px;width:22.2px;height:54.2px;background:#3d3d3d;"></div>
<div style="left:605px;top:43.4px;width:20.8px;height:53.0px;background:#535353;"></div>
<div style="left:609.5px;top:45.4px;width:12.5px;height:1.2px;background:#474747;"></div>
<div style="left:604.3px;top:96.6px;width:22.2px;height:40.0px;background:#3d3d3d;"></div>
<div style="left:605px;top:97.19999999999999px;width:20.8px;height:38.8px;background:#535353;"></div>
<div style="left:609.5px;top:99.19999999999999px;width:12.5px;height:1.2px;background:#474747;"></div>
<div style="left:604.3px;top:136.1px;width:22.2px;height:39.70000000000002px;background:#3d3d3d;"></div>
<div style="left:605px;top:136.7px;width:20.8px;height:38.500000000000014px;background:#535353;"></div>
<div style="left:609.5px;top:138.7px;width:12.5px;height:1.2px;background:#474747;"></div>
<div style="left:604.3px;top:175.4px;width:22.2px;height:23.400000000000006px;background:#3d3d3d;"></div>
<div style="left:605px;top:176.0px;width:20.8px;height:22.200000000000006px;background:#535353;"></div>
<div style="left:609.5px;top:178.0px;width:12.5px;height:1.2px;background:#474747;"></div>
<div style="left:604.3px;top:198.4px;width:22.2px;height:212px;background:#3d3d3d;"></div>
<div style="left:605px;top:199px;width:20.8px;height:211px;background:#535353;"></div>
<svg style="left:0px;top:0px;" width="768" height="410" viewBox="0 0 768 410"><text x="611.3" y="59.9" font-family="Liberation Sans" font-size="10.5" fill="#d4d4d4" textLength="7.5" lengthAdjust="spacingAndGlyphs">A</text><rect x="619.2" y="51.8" width="0.9" height="8.6" fill="#d4d4d4"/><path d="M615.5 68.6 L619.8 68.6 L619.8 77.2 L618.6 77.2 L618.6 69.6 L617.4 69.6 L617.4 77.2 L616.3 77.2 L616.3 73.5 Q612.4 73.5 612.4 71 Q612.4 68.6 615.5 68.6 Z" fill="#d4d4d4"/><text x="610.8" y="92.3" font-family="Liberation Serif" font-style="italic" font-size="11" fill="#d4d4d4">O</text><text x="614.5" y="115.3" font-family="Liberation Sans" font-size="9.5" fill="#d4d4d4">A</text><circle cx="613.8" cy="112.5" r="2.1" fill="#d4d4d4" stroke="#535353" stroke-width="0.6"/><circle cx="615.5" cy="114" r="2.1" fill="#d4d4d4" stroke="#535353" stroke-width="0.6"/><path d="M617.5 121.8 L621 121.8 L621 130.8 L620 130.8 L620 122.7 L619 122.7 L619 128 L618.2 128 L618.2 126.5 Q615.5 126.5 615.5 124.2 Q615.5 121.8 617.5 121.8 Z" fill="#d4d4d4"/><circle cx="613.8" cy="127.8" r="2.1" fill="#d4d4d4" stroke="#535353" stroke-width="0.6"/><circle cx="615.5" cy="129.3" r="2.1" fill="#d4d4d4" stroke="#535353" stroke-width="0.6"/><path d="M615.5 146 L611.6 146 L611.6 153.6 L619.3 153.6 L619.3 149.8" stroke="#d4d4d4" stroke-width="1" fill="none"/><path d="M615.5 149.8 L620.8 144.6 M617.3 144.6 L620.8 144.6 L620.8 148" stroke="#d4d4d4" stroke-width="1" fill="none"/><rect x="610.7" y="164.2" width="6.2" height="3.8" rx="1.9" stroke="#d4d4d4" stroke-width="0.9" fill="none"/><rect x="614.3" y="164.2" width="6.2" height="3.8" rx="1.9" stroke="#d4d4d4" stroke-width="0.9" fill="none"/><path d="M616 184 L621 187.3 L616 190.5 L611 187.3 Z" fill="#d4d4d4"/><path d="M611.3 189.8 L616 192.9 L620.7 189.8" stroke="#d4d4d4" stroke-width="1" fill="none"/></svg>
<div style="left:627.3px;top:42.8px;width:140.7px;height:15.600000000000001px;background:#3f3f3f;"></div>
<div style="left:627.3px;top:43.0px;width:43.200000000000045px;height:14.600000000000001px;background:#484848;"></div>
<div style="left:632.50px;top:48.84px;font:normal normal 6.6px/1 'Liberation Sans', sans-serif;color:#bdbdbd;white-space:pre;transform:scaleX(0.900);transform-origin:0 0;-webkit-text-stroke:0.15px #bdbdbd;">Transformar</div>
<div style="left:671.5px;top:43.0px;width:41.200000000000045px;height:14.600000000000001px;background:#484848;"></div>
<div style="left:676.00px;top:48.84px;font:normal normal 6.6px/1 'Liberation Sans', sans-serif;color:#bdbdbd;white-space:pre;transform:scaleX(0.851);transform-origin:0 0;-webkit-text-stroke:0.15px #bdbdbd;">Propiedades</div>
<div style="left:713.5px;top:43.0px;width:31.5px;height:15.600000000000001px;background:#535353;"></div>
<svg style="left:715.2px;top:47.599999999999994px;" width="5" height="7" viewBox="0 0 5 7"><path d="M0.9 2.6 L2.5 1 L4.1 2.6 M0.9 4.4 L2.5 6 L4.1 4.4" stroke="#cfcfcf" stroke-width="0.8" fill="none"/></svg>
<div style="left:722.00px;top:48.49px;font:normal normal 6.3px/1 'Liberation Sans', sans-serif;color:#f6f6f6;white-space:pre;transform:scaleX(0.944);transform-origin:0 0;-webkit-text-stroke:0.35px #f6f6f6">Alinear</div>
<svg style="left:758.5px;top:47.8px;" width="7" height="6" viewBox="0 0 7 6"><g fill="#b4b4b4"><rect x="0.3" y="0.4" width="5.8" height="0.8"/><rect x="0.3" y="2.3" width="5.8" height="0.8"/><rect x="0.3" y="4.2" width="5.8" height="0.8"/></g></svg>
<div style="left:630.30px;top:64.74px;font:normal normal 6.6px/1 'Liberation Sans', sans-serif;color:#d2d2d2;white-space:pre;transform:scaleX(0.847);transform-origin:0 0;-webkit-text-stroke:0.15px #d2d2d2;">Alinear objetos:</div>
<svg style="left:0px;top:0px;" width="768" height="410" viewBox="0 0 768 410"><rect x="632.4" y="76.3" width="0.9" height="9.1" fill="#c6c6c6"/><rect x="633.6" y="77.5" width="4.6" height="2.8" fill="#c6c6c6"/><rect x="633.6" y="81.6" width="8" height="2.8" fill="#c6c6c6"/><rect x="656.7" y="76.3" width="0.9" height="9.1" fill="#c6c6c6"/><rect x="654" y="77.5" width="6" height="2.8" fill="#c6c6c6"/><rect x="653.4" y="81.6" width="8" height="2.8" fill="#c6c6c6"/><rect x="681.9" y="76.3" width="0.9" height="9.1" fill="#c6c6c6"/><rect x="677" y="77.5" width="4.8" height="2.8" fill="#c6c6c6"/><rect x="674" y="81.6" width="7.8" height="2.8" fill="#c6c6c6"/><rect x="712.2" y="76.3" width="10.4" height="0.9" fill="#c6c6c6"/><rect x="713.6" y="77.4" width="3.2" height="7.6" fill="#c6c6c6"/><rect x="718.4" y="77.4" width="3.2" height="4" fill="#c6c6c6"/><rect x="732.6" y="80.3" width="10.1" height="0.9" fill="#c6c6c6"/><rect x="734.5" y="77" width="3" height="8" fill="#c6c6c6"/><rect x="739" y="78.5" width="3" height="4" fill="#c6c6c6"/><rect x="753" y="84.4" width="10" height="0.9" fill="#c6c6c6"/><rect x="754.5" y="77" width="3" height="7.3" fill="#c6c6c6"/><rect x="759" y="80" width="3" height="4.3" fill="#c6c6c6"/></svg>
<div style="left:630.3px;top:90.8px;width:134.5px;height:0.8px;background:#4a4a4a;"></div>
<div style="left:630.30px;top:97.04px;font:normal normal 6.6px/1 'Liberation Sans', sans-serif;color:#d2d2d2;white-space:pre;transform:scaleX(0.862);transform-origin:0 0;-webkit-text-stroke:0.15px #d2d2d2;">Distribuir objetos:</div>
<svg style="left:0px;top:0px;" width="768" height="410" viewBox="0 0 768 410"><rect x="632" y="109" width="10.5" height="0.9" fill="#c6c6c6"/><rect x="634.5" y="110.4" width="5" height="2.5" fill="#c6c6c6"/><rect x="632" y="114.5" width="10.5" height="0.9" fill="#c6c6c6"/><rect x="633.5" y="116" width="8" height="3" fill="#c6c6c6"/><rect x="652" y="111.5" width="10.5" height="0.9" fill="#c6c6c6"/><rect x="654.2" y="110.2" width="6" height="3.2" fill="#c6c6c6"/><rect x="652" y="116.5" width="10.5" height="0.9" fill="#c6c6c6"/><rect x="653.4" y="115.2" width="8" height="3.2" fill="#c6c6c6"/><rect x="675.2" y="110.5" width="5" height="2.5" fill="#c6c6c6"/><rect x="673.5" y="113" width="9" height="0.9" fill="#c6c6c6"/><rect x="674" y="115.4" width="8" height="3" fill="#c6c6c6"/><rect x="673.5" y="118.6" width="9" height="0.9" fill="#c6c6c6"/><rect x="712.5" y="109.3" width="0.9" height="10.2" fill="#c6c6c6"/><rect x="713.8" y="110" width="3.2" height="9" fill="#c6c6c6"/><rect x="718.2" y="110.6" width="0.9" height="8" fill="#c6c6c6"/><rect x="719.5" y="111.6" width="2.5" height="5" fill="#c6c6c6"/><rect x="734.5" y="110" width="2.8" height="9" fill="#c6c6c6"/><rect x="735.7" y="108.8" width="0.9" height="11.3" fill="#c6c6c6"/><rect x="739.5" y="111" width="2.6" height="7" fill="#c6c6c6"/><rect x="740.5" y="109.5" width="0.9" height="10.5" fill="#c6c6c6"/><rect x="753.3" y="111" width="2.6" height="7" fill="#c6c6c6"/><rect x="756.2" y="109.5" width="0.9" height="10" fill="#c6c6c6"/><rect x="758.5" y="111.8" width="2.5" height="5" fill="#c6c6c6"/><rect x="761.8" y="109.3" width="0.9" height="10.2" fill="#c6c6c6"/></svg>
<div style="left:630.3px;top:124.4px;width:134.5px;height:0.8px;background:#4a4a4a;"></div>
<div style="left:630.00px;top:129.94px;font:normal normal 6.6px/1 'Liberation Sans', sans-serif;color:#d2d2d2;white-space:pre;transform:scaleX(0.845);transform-origin:0 0;-webkit-text-stroke:0.15px #d2d2d2;">Distribuir espaciado:</div>
<div style="left:721px;top:127.4px;width:0.8px;height:26.8px;background:#4a4a4a;"></div>
<div style="left:735.00px;top:130.14px;font:normal normal 6.6px/1 'Liberation Sans', sans-serif;color:#d2d2d2;white-space:pre;transform:scaleX(0.853);transform-origin:0 0;-webkit-text-stroke:0.15px #d2d2d2;">Alinear con:</div>
<svg style="left:0px;top:0px;" width="768" height="410" viewBox="0 0 768 410"><rect x="632.6" y="143.8" width="2" height="0.8" fill="#c6c6c6"/><rect x="633.2" y="143.2" width="0.8" height="2" fill="#c6c6c6"/><rect x="636.5" y="142.2" width="5.8" height="3" fill="#c6c6c6"/><rect x="632.6" y="146.8" width="9.7" height="0.9" fill="#c6c6c6"/><rect x="633.2" y="148" width="0.8" height="2.3" fill="#c6c6c6"/><rect x="636.5" y="148" width="5.8" height="3" fill="#c6c6c6"/><rect x="651" y="144.8" width="3.2" height="6.2" fill="#c6c6c6"/><rect x="655.3" y="142.5" width="0.9" height="9" fill="#c6c6c6"/><rect x="653.5" y="142.8" width="4.5" height="0.8" fill="#c6c6c6"/><rect x="656.8" y="144.8" width="2.8" height="6.2" fill="#c6c6c6"/></svg>
<div style="left:665.2px;top:141.3px;width:42.5px;height:11.1px;background:#4f4f4f;box-sizing:border-box;border:0.7px solid #4a4a4a"></div>
<div style="left:675.8px;top:141.6px;width:0.7px;height:10.6px;background:#4a4a4a;"></div>
<svg style="left:666.5px;top:142.2px;" width="9" height="10" viewBox="0 0 9 10"><path d="M2.2 3.6 L4.5 1.5 L6.8 3.6 M2.2 6.2 L4.5 8.3 L6.8 6.2" stroke="#6e6e6e" stroke-width="0.8" fill="none"/></svg>
<div style="left:678.00px;top:144.72px;font:normal normal 6.5px/1 'Liberation Sans', sans-serif;color:#7a7a7a;white-space:pre;transform:scaleX(1.180);transform-origin:0 0;-webkit-text-stroke:0.15px #7a7a7a;">0 px</div>
<svg style="left:738.5px;top:141.3px;" width="16" height="10.5" viewBox="0 0 16 10.5"><g fill="#cfcfcf"><rect x="0.4" y="0.3" width="1.3" height="1.3"/><rect x="3.7" y="0.3" width="1.3" height="1.3"/><rect x="7" y="0.3" width="1.3" height="1.3"/><rect x="0.4" y="4" width="1.3" height="1.3"/><rect x="7" y="4" width="1.3" height="1.3"/><rect x="0.4" y="7.8" width="1.3" height="1.3"/><rect x="3.7" y="7.8" width="1.3" height="1.3"/><rect x="7" y="7.8" width="1.3" height="1.3"/><rect x="3.6" y="3.9" width="1.5" height="1.5"/></g><path d="M10 4.3 L12 6.2 L14 4.3" stroke="#cfcfcf" stroke-width="0.9" fill="none"/></svg>
<div style="left:627.3px;top:157.4px;width:140.7px;height:0.8px;background:#3c3c3c;"></div>
<div style="left:627.3px;top:158.2px;width:140.7px;height:15.800000000000011px;background:#3f3f3f;"></div>
<div style="left:627.5px;top:158.39999999999998px;width:24.5px;height:14.800000000000011px;background:#484848;"></div>
<div style="left:632.60px;top:164.24px;font:normal normal 6.6px/1 'Liberation Sans', sans-serif;color:#bdbdbd;white-space:pre;transform:scaleX(0.908);transform-origin:0 0;-webkit-text-stroke:0.15px #bdbdbd;">Muestr</div>
<div style="left:652.5px;top:158.39999999999998px;width:19.0px;height:14.800000000000011px;background:#484848;"></div>
<div style="left:655.80px;top:164.24px;font:normal normal 6.6px/1 'Liberation Sans', sans-serif;color:#bdbdbd;white-space:pre;transform:scaleX(0.901);transform-origin:0 0;-webkit-text-stroke:0.15px #bdbdbd;">Color</div>
<div style="left:672px;top:158.39999999999998px;width:24px;height:14.800000000000011px;background:#484848;"></div>
<div style="left:676.80px;top:164.24px;font:normal normal 6.6px/1 'Liberation Sans', sans-serif;color:#bdbdbd;white-space:pre;transform:scaleX(0.895);transform-origin:0 0;-webkit-text-stroke:0.15px #bdbdbd;">Guía de</div>
<div style="left:696.6px;top:158.39999999999998px;width:48.69999999999993px;height:15.800000000000011px;background:#535353;"></div>
<svg style="left:697.2px;top:163.0px;" width="5" height="7" viewBox="0 0 5 7"><path d="M0.9 2.6 L2.5 1 L4.1 2.6 M0.9 4.4 L2.5 6 L4.1 4.4" stroke="#cfcfcf" stroke-width="0.8" fill="none"/></svg>
<div style="left:704.00px;top:163.90px;font:normal normal 6.3px/1 'Liberation Sans', sans-serif;color:#f6f6f6;white-space:pre;transform:scaleX(0.900);transform-origin:0 0;-webkit-text-stroke:0.35px #f6f6f6">Transparencia</div>
<svg style="left:758.5px;top:163.2px;" width="7" height="6" viewBox="0 0 7 6"><g fill="#b4b4b4"><rect x="0.3" y="0.4" width="5.8" height="0.8"/><rect x="0.3" y="2.3" width="5.8" height="0.8"/><rect x="0.3" y="4.2" width="5.8" height="0.8"/></g></svg>
<div style="left:630.9px;top:178.4px;width:54.9px;height:10.3px;background:#454545;border-radius:2px"></div>
<div style="left:633.80px;top:181.14px;font:normal bold 6.6px/1 'Liberation Sans', sans-serif;color:#f0f0f0;white-space:pre;transform:scaleX(0.814);transform-origin:0 0;">Normal</div>
<svg style="left:679.5px;top:181.5px;" width="6" height="4" viewBox="0 0 6 4"><path d="M0.8 0.8 L2.9 2.9 L5 0.8" stroke="#e0e0e0" stroke-width="1" fill="none"/></svg>
<div style="left:689.90px;top:181.24px;font:normal normal 6.6px/1 'Liberation Sans', sans-serif;color:#d2d2d2;white-space:pre;transform:scaleX(0.832);transform-origin:0 0;-webkit-text-stroke:0.15px #d2d2d2;">Opacidad:</div>
<div style="left:717.25px;top:178.25px;width:27.75px;height:10.65px;background:#434343;"></div>
<div style="left:718.60px;top:181.14px;font:normal normal 6.6px/1 'Liberation Sans', sans-serif;color:#ececec;white-space:pre;transform:scaleX(0.860);transform-origin:0 0;-webkit-text-stroke:0.15px #ececec;">100%</div>
<div style="left:745px;top:178.25px;width:10px;height:10.65px;background:#4b4b4b;border-radius:0 2px 2px 0"></div>
<svg style="left:748px;top:180.8px;" width="5" height="6" viewBox="0 0 5 6"><path d="M1.2 0.7 L3.4 2.8 L1.2 4.9" stroke="#e0e0e0" stroke-width="1" fill="none"/></svg>
<div style="left:630.3px;top:192.3px;width:134.5px;height:0.8px;background:#4a4a4a;"></div>
<div style="left:630.7px;top:196.9px;width:75.6px;height:31.4px;background:#535353;box-sizing:border-box;border:1px solid #4a4a4a;"></div>
<div style="left:707.9px;top:196.2px;width:54.7px;height:11.4px;background:#575757;border-radius:1px"></div>
<div style="left:717.25px;top:199.14px;font:normal normal 6.6px/1 'Liberation Sans', sans-serif;color:#7c7c7c;white-space:pre;transform:scaleX(0.826);transform-origin:0 0;-webkit-text-stroke:0.15px #7c7c7c;">Crear máscara</div>
<div style="left:708.6px;top:211px;width:7.1px;height:7.1px;background:transparent;box-sizing:border-box;border:1px solid #6a6a6a;border-radius:1px"></div>
<div style="left:717.90px;top:212.04px;font:normal normal 6.6px/1 'Liberation Sans', sans-serif;color:#7a7a7a;white-space:pre;transform:scaleX(0.838);transform-origin:0 0;-webkit-text-stroke:0.15px #7a7a7a;">Recortar</div>
<div style="left:708.6px;top:222.2px;width:7.1px;height:7.1px;background:transparent;box-sizing:border-box;border:1px solid #6a6a6a;border-radius:1px"></div>
<div style="left:717.90px;top:223.34px;font:normal normal 6.6px/1 'Liberation Sans', sans-serif;color:#7a7a7a;white-space:pre;transform:scaleX(0.872);transform-origin:0 0;-webkit-text-stroke:0.15px #7a7a7a;">Inv. máscara</div>
<div style="left:627.3px;top:232.2px;width:140.7px;height:2.6px;background:#3c3c3c;"></div>
<div style="left:627.3px;top:234.8px;width:140.7px;height:14.5px;background:#3f3f3f;"></div>
<div style="left:627.3px;top:235.0px;width:27.700000000000045px;height:14.5px;background:#535353;"></div>
<svg style="left:629.2px;top:239.60000000000002px;" width="5" height="7" viewBox="0 0 5 7"><path d="M0.9 2.6 L2.5 1 L4.1 2.6 M0.9 4.4 L2.5 6 L4.1 4.4" stroke="#cfcfcf" stroke-width="0.8" fill="none"/></svg>
<div style="left:636.00px;top:240.50px;font:normal normal 6.3px/1 'Liberation Sans', sans-serif;color:#f6f6f6;white-space:pre;transform:scaleX(1.166);transform-origin:0 0;-webkit-text-stroke:0.35px #f6f6f6">Trazo</div>
<svg style="left:758.5px;top:239.8px;" width="7" height="6" viewBox="0 0 7 6"><g fill="#b4b4b4"><rect x="0.3" y="0.4" width="5.8" height="0.8"/><rect x="0.3" y="2.3" width="5.8" height="0.8"/><rect x="0.3" y="4.2" width="5.8" height="0.8"/></g></svg>
<div style="left:644.90px;top:256.74px;font:normal normal 6.6px/1 'Liberation Sans', sans-serif;color:#d2d2d2;white-space:pre;transform:scaleX(0.823);transform-origin:0 0;-webkit-text-stroke:0.15px #d2d2d2;">Grosor:</div>
<div style="left:666px;top:253.8px;width:9.7px;height:10.4px;background:#464646;border-radius:2px 0 0 2px"></div>
<svg style="left:666.5px;top:254px;" width="9" height="10" viewBox="0 0 9 10"><path d="M2.4 3.4 L4.6 1.3 L6.8 3.4 M2.4 6.4 L4.6 8.5 L6.8 6.4" stroke="#d8d8d8" stroke-width="0.9" fill="none"/></svg>
<div style="left:675.7px;top:253.8px;width:27.9px;height:10.4px;background:#3f3f3f;"></div>
<div style="left:704.4px;top:253.8px;width:9px;height:10.4px;background:#464646;border-radius:0 2px 2px 0"></div>
<svg style="left:706.4px;top:257px;" width="6" height="4" viewBox="0 0 6 4"><path d="M0.8 0.8 L2.9 2.9 L5 0.8" stroke="#e0e0e0" stroke-width="1" fill="none"/></svg>
<div style="left:642.60px;top:270.44px;font:normal normal 6.6px/1 'Liberation Sans', sans-serif;color:#7a7a7a;white-space:pre;transform:scaleX(0.723);transform-origin:0 0;-webkit-text-stroke:0.15px #7a7a7a;">Remates:</div>
<div style="left:643.50px;top:285.64px;font:normal normal 6.6px/1 'Liberation Sans', sans-serif;color:#7a7a7a;white-space:pre;transform:scaleX(0.760);transform-origin:0 0;-webkit-text-stroke:0.15px #7a7a7a;">Vértices:</div>
<div style="left:630.30px;top:301.64px;font:normal normal 6.6px/1 'Liberation Sans', sans-serif;color:#7a7a7a;white-space:pre;transform:scaleX(0.842);transform-origin:0 0;-webkit-text-stroke:0.15px #7a7a7a;">Alinear trazo:</div>
<svg style="left:0px;top:0px;" width="768" height="410" viewBox="0 0 768 410"><rect x="666.35" y="268.35" width="11.3" height="11.1" fill="none" stroke="#4b4b4b" stroke-width="0.7"/><rect x="678.15" y="268.35" width="11.3" height="11.1" fill="none" stroke="#4b4b4b" stroke-width="0.7"/><rect x="689.95" y="268.35" width="11.3" height="11.1" fill="none" stroke="#4b4b4b" stroke-width="0.7"/><rect x="666.35" y="283.45000000000005" width="11.3" height="11.1" fill="none" stroke="#4b4b4b" stroke-width="0.7"/><rect x="678.15" y="283.45000000000005" width="11.3" height="11.1" fill="none" stroke="#4b4b4b" stroke-width="0.7"/><rect x="689.95" y="283.45000000000005" width="11.3" height="11.1" fill="none" stroke="#4b4b4b" stroke-width="0.7"/><rect x="666.35" y="298.65000000000003" width="11.3" height="11.1" fill="none" stroke="#4b4b4b" stroke-width="0.7"/><rect x="678.15" y="298.65000000000003" width="11.3" height="11.1" fill="none" stroke="#4b4b4b" stroke-width="0.7"/><rect x="689.95" y="298.65000000000003" width="11.3" height="11.1" fill="none" stroke="#4b4b4b" stroke-width="0.7"/><g fill="#777777"><rect x="670.5" y="271.3" width="5" height="2"/><rect x="670.5" y="274.6" width="5" height="2"/><rect x="669.5" y="271.3" width="0.8" height="5.3"/><path d="M686 271.3 L682.5 271.3 Q680.5 271.3 680.5 274 Q680.5 276.6 682.5 276.6 L686 276.6 L686 275 L683 275 Q682.2 275 682.2 274 Q682.2 273 683 273 L686 273 Z"/><rect x="692.5" y="271.3" width="6" height="2"/><rect x="692.5" y="274.6" width="6" height="2"/><rect x="692" y="271.3" width="1.2" height="5.3"/></g><g fill="#777777"><path d="M669 286.5 L675.5 286.5 L675.5 288.3 L671 288.3 L671 292 L669 292 Z"/><rect x="672" y="289.3" width="3.5" height="1.3"/><path d="M680.8 292 L680.8 289 Q680.8 286.5 683.5 286.5 L687.3 286.5 L687.3 288.3 L683.8 288.3 Q682.8 288.3 682.8 289.3 L682.8 292 Z"/><rect x="684" y="289.3" width="3.3" height="1.3"/><path d="M692.6 292 L692.6 289.3 L695.5 286.5 L699 286.5 L699 288.3 L696 288.3 L694.6 289.7 L694.6 292 Z"/><rect x="695.8" y="289.3" width="3.2" height="1.3"/></g><g fill="#777777"><rect x="669.2" y="301" width="1" height="7"/><rect x="669.2" y="307" width="7" height="1"/><rect x="671" y="304" width="3" height="2.5"/><rect x="680.8" y="305" width="7.2" height="0.9"/><rect x="682" y="301.5" width="2.6" height="3.5"/><rect x="681.5" y="306" width="4" height="2"/><rect x="692.3" y="301" width="1" height="7"/><rect x="693" y="302.5" width="3" height="3"/><rect x="692.3" y="307" width="7" height="1"/></g></svg>
<div style="left:720.50px;top:286.54px;font:normal normal 6.6px/1 'Liberation Sans', sans-serif;color:#7a7a7a;white-space:pre;transform:scaleX(0.809);transform-origin:0 0;-webkit-text-stroke:0.15px #7a7a7a;">Límite:</div>
<div style="left:738.7px;top:283px;width:22px;height:11.7px;background:#525252;box-sizing:border-box;border:0.7px solid #4a4a4a"></div>
<div style="left:763.00px;top:286.45px;font:normal normal 6px/1 'Liberation Sans', sans-serif;color:#7a7a7a;white-space:pre;-webkit-text-stroke:0.15px #7a7a7a;">x</div>
<div style="left:630.3px;top:313.7px;width:134.5px;height:0.8px;background:#4a4a4a;"></div>
<div style="left:630.7px;top:319.7px;width:6.4px;height:6.4px;background:#cfcfcf;border-radius:1px"></div>
<div style="left:632.2px;top:321.8px;width:3.4px;height:2.2px;background:#555555;"></div>
<div style="left:640.00px;top:320.94px;font:normal bold 6.6px/1 'Liberation Sans', sans-serif;color:#ececec;white-space:pre;transform:scaleX(0.767);transform-origin:0 0;">Línea discontinua</div>
<div style="left:721.9px;top:317.4px;width:42.4px;height:12px;background:transparent;box-sizing:border-box;border:1px solid #4a4a4a;border-radius:1px"></div>
<div style="left:743.3px;top:317.4px;width:0.7px;height:12px;background:#4a4a4a;"></div>
<svg style="left:721.9px;top:317.4px;" width="43" height="12" viewBox="0 0 43 12"><g fill="none" stroke="#7e7e7e" stroke-width="0.9" stroke-dasharray="2.6 1.8"><rect x="3.8" y="3" width="11.6" height="6"/><rect x="25.5" y="3" width="11.6" height="6"/></g></svg>
<div style="left:631.0px;top:332.6px;width:19.5px;height:11.4px;background:#575757;"></div>
<div style="left:633.50px;top:345.91px;font:normal normal 6.4px/1 'Liberation Sans', sans-serif;color:#777777;white-space:pre;transform:scaleX(0.927);transform-origin:0 0;-webkit-text-stroke:0.15px #777777;">guión</div>
<div style="left:653.75px;top:332.6px;width:19.5px;height:11.4px;background:#575757;"></div>
<div style="left:655.65px;top:345.91px;font:normal normal 6.4px/1 'Liberation Sans', sans-serif;color:#777777;white-space:pre;transform:scaleX(0.902);transform-origin:0 0;-webkit-text-stroke:0.15px #777777;">hueco</div>
<div style="left:676.5px;top:332.6px;width:19.5px;height:11.4px;background:#575757;"></div>
<div style="left:679.00px;top:345.91px;font:normal normal 6.4px/1 'Liberation Sans', sans-serif;color:#777777;white-space:pre;transform:scaleX(0.927);transform-origin:0 0;-webkit-text-stroke:0.15px #777777;">guión</div>
<div style="left:699.25px;top:332.6px;width:19.5px;height:11.4px;background:#575757;"></div>
<div style="left:701.15px;top:345.91px;font:normal normal 6.4px/1 'Liberation Sans', sans-serif;color:#777777;white-space:pre;transform:scaleX(0.902);transform-origin:0 0;-webkit-text-stroke:0.15px #777777;">hueco</div>
<div style="left:722.0px;top:332.6px;width:19.5px;height:11.4px;background:#575757;"></div>
<div style="left:724.50px;top:345.91px;font:normal normal 6.4px/1 'Liberation Sans', sans-serif;color:#777777;white-space:pre;transform:scaleX(0.927);transform-origin:0 0;-webkit-text-stroke:0.15px #777777;">guión</div>
<div style="left:744.75px;top:332.6px;width:19.5px;height:11.4px;background:#575757;"></div>
<div style="left:746.65px;top:345.91px;font:normal normal 6.4px/1 'Liberation Sans', sans-serif;color:#777777;white-space:pre;transform:scaleX(0.902);transform-origin:0 0;-webkit-text-stroke:0.15px #777777;">hueco</div>
<div style="left:627.3px;top:355.8px;width:140.7px;height:2.5px;background:#3c3c3c;"></div>
<div style="left:627.3px;top:358.3px;width:140.7px;height:15.099999999999966px;background:#3f3f3f;"></div>
<div style="left:627.3px;top:358.5px;width:53.700000000000045px;height:15.099999999999966px;background:#535353;"></div>
<svg style="left:758.5px;top:363.3px;" width="7" height="6" viewBox="0 0 7 6"><g fill="#b4b4b4"><rect x="0.3" y="0.4" width="5.8" height="0.8"/><rect x="0.3" y="2.3" width="5.8" height="0.8"/><rect x="0.3" y="4.2" width="5.8" height="0.8"/></g></svg>
<div style="left:632.60px;top:362.94px;font:normal normal 6.6px/1 'Liberation Sans', sans-serif;color:#f0f0f0;white-space:pre;transform:scaleX(0.870);transform-origin:0 0;-webkit-text-stroke:0.2px #f0f0f0">Mesas de trabajo</div>
<div style="left:594px;top:52px;width:10px;height:9.5px;background:#474747;"></div>
<svg style="left:596px;top:54.5px;" width="6" height="4" viewBox="0 0 6 4"><path d="M0.8 3.2 L2.9 1 L5 3.2" stroke="#bdbdbd" stroke-width="0.9" fill="none"/></svg>
<div style="left:595px;top:219px;width:7.5px;height:14.4px;background:#5e5e5e;border-radius:3.7px"></div>
<svg style="left:596px;top:393.5px;" width="6" height="4" viewBox="0 0 6 4"><path d="M0.8 0.8 L2.9 3 L5 0.8" stroke="#bdbdbd" stroke-width="0.9" fill="none"/></svg>
<div style="left:22px;top:399.5px;width:582px;height:10.5px;background:#474747;"></div>
<div style="left:22px;top:399.5px;width:582px;height:0.7px;background:#3e3e3e;"></div>
<div style="left:22.5px;top:400.3px;width:31.5px;height:9.7px;background:#3d3d3d;"></div>
<div style="left:27.00px;top:402.94px;font:normal normal 6.6px/1 'Liberation Sans', sans-serif;color:#e8e8e8;white-space:pre;transform:scaleX(0.850);transform-origin:0 0;-webkit-text-stroke:0.15px #e8e8e8;">66.67%</div>
<div style="left:54px;top:400.3px;width:8.5px;height:9.7px;background:#454545;"></div>
<svg style="left:55.5px;top:403.5px;" width="6" height="4" viewBox="0 0 6 4"><path d="M0.8 0.8 L2.9 2.9 L5 0.8" stroke="#e0e0e0" stroke-width="1" fill="none"/></svg>
<svg style="left:66px;top:401.5px;" width="20" height="8" viewBox="0 0 20 8"><g fill="#727272"><rect x="1.8" y="1" width="0.9" height="5.5"/><path d="M7.6 1 L7.6 6.5 L4.2 3.75 Z"/><path d="M16.8 1 L16.8 6.5 L13.4 3.75 Z"/></g></svg>
<div style="left:87.5px;top:400.3px;width:22.5px;height:9.7px;background:#3d3d3d;"></div>
<div style="left:90.00px;top:402.94px;font:normal normal 6.6px/1 'Liberation Sans', sans-serif;color:#e8e8e8;white-space:pre;-webkit-text-stroke:0.15px #e8e8e8;">1</div>
<div style="left:110px;top:400.3px;width:9px;height:9.7px;background:#454545;"></div>
<svg style="left:111.5px;top:403.5px;" width="6" height="4" viewBox="0 0 6 4"><path d="M0.8 0.8 L2.9 2.9 L5 0.8" stroke="#e0e0e0" stroke-width="1" fill="none"/></svg>
<svg style="left:122px;top:401.5px;" width="22" height="8" viewBox="0 0 22 8"><g fill="#727272"><path d="M3.2 1 L3.2 6.5 L6.6 3.75 Z"/><path d="M12.2 1 L12.2 6.5 L15.6 3.75 Z"/><rect x="16.3" y="1" width="0.9" height="5.5"/></g></svg>
<div style="left:144px;top:400.3px;width:0.7px;height:9.7px;background:#3e3e3e;"></div>
<div style="left:188.75px;top:402.94px;font:normal normal 6.6px/1 'Liberation Sans', sans-serif;color:#e0e0e0;white-space:pre;transform:scaleX(0.804);transform-origin:0 0;-webkit-text-stroke:0.15px #e0e0e0;">Selección</div>
<div style="left:256.4px;top:400.3px;width:9.8px;height:9.7px;background:#3c3c3c;"></div>
<svg style="left:258px;top:401.5px;" width="20" height="8" viewBox="0 0 20 8"><path d="M2.4 1 L2.4 6.5 L6.2 3.75 Z" fill="#d0d0d0"/><path d="M15 1.3 L12.6 3.75 L15 6.2" stroke="#bdbdbd" stroke-width="0.9" fill="none"/></svg>
<div style="left:275px;top:400.3px;width:319px;height:9.7px;background:#474747;"></div>
<div style="left:423.75px;top:401.2px;width:12.3px;height:7.3px;background:#5a5a5a;border-radius:3.6px"></div>
<svg style="left:586px;top:402px;" width="5" height="6" viewBox="0 0 5 6"><path d="M1 0.8 L3.2 2.9 L1 5" stroke="#bdbdbd" stroke-width="0.9" fill="none"/></svg>
<div style="left:594px;top:399.5px;width:10px;height:10.5px;background:#505050;"></div>
<div style="left:0px;top:408.8px;width:768px;height:1.2px;background:#3a3a3a;"></div>
<svg style="left:0px;top:0px;" width="768" height="410" viewBox="0 0 768 410"><defs><linearGradient id="g4" x1="0" x2="1"><stop offset="0" stop-color="#222"/><stop offset="1" stop-color="#f0f0f0"/></linearGradient></defs><rect x="560.5" y="71.2" width="9.8" height="7" rx="1" fill="url(#g4)" stroke="#c8c8c8" stroke-width="0.8"/><rect x="42" y="256.2" width="4.8" height="5.6" fill="#c8c8c8"/><rect x="42" y="258.4" width="4.8" height="0.6" fill="#555"/><path d="M43 256 L41 250.5 M44.5 256 L44.5 249.5 M46 256 L48.8 251.5" stroke="#c8c8c8" stroke-width="1.1"/><path d="M41 250 L40.3 252.5 L42 252 Z M44.5 249 L43.6 251.5 L45.4 251.5 Z M49 251 L48.6 253.6 L47 252.2 Z" fill="#c8c8c8"/><circle cx="44.9" cy="269.2" r="2.3" fill="#c8c8c8"/><circle cx="42.3" cy="272.6" r="2.3" fill="#c8c8c8"/><circle cx="47.5" cy="272.6" r="2.3" fill="#c8c8c8"/><path d="M44.9 271 L44.9 275.5 M42.8 276.2 L47 276.2" stroke="#c8c8c8" stroke-width="1"/><path d="M46 305.4 L52.8 305.4 L52.8 313.2 L46 313.2" stroke="#c8c8c8" stroke-width="0.9" fill="none"/><path d="M46 305.4 L46 309" stroke="#c8c8c8" stroke-width="0.9"/><circle cx="44.6" cy="310.8" r="2.2" fill="#777" stroke="#c8c8c8" stroke-width="0.8"/><circle cx="46.3" cy="312.6" r="1.8" fill="#c8c8c8"/><rect x="44.2" y="320.5" width="5" height="5" fill="#c8c8c8"/><rect x="47.6" y="323.8" width="5" height="5" fill="#c8c8c8" stroke="#535353" stroke-width="0.6"/><rect x="48.2" y="324.4" width="1" height="1" fill="#535353"/><path d="M44 344.8 Q41.6 344.5 41.8 341.3 Q42 338.2 45.5 337.8 Q47 336 49.8 336.6 Q53.8 337.6 54 341 Q54.2 344.8 50.8 345 Z" fill="none" stroke="#c8c8c8" stroke-width="1.1"/><path d="M44 342.5 Q45.8 339.5 48 341.5 Q50 343.5 51.5 340.5" fill="none" stroke="#c8c8c8" stroke-width="1.1"/></svg>
</body></html>
